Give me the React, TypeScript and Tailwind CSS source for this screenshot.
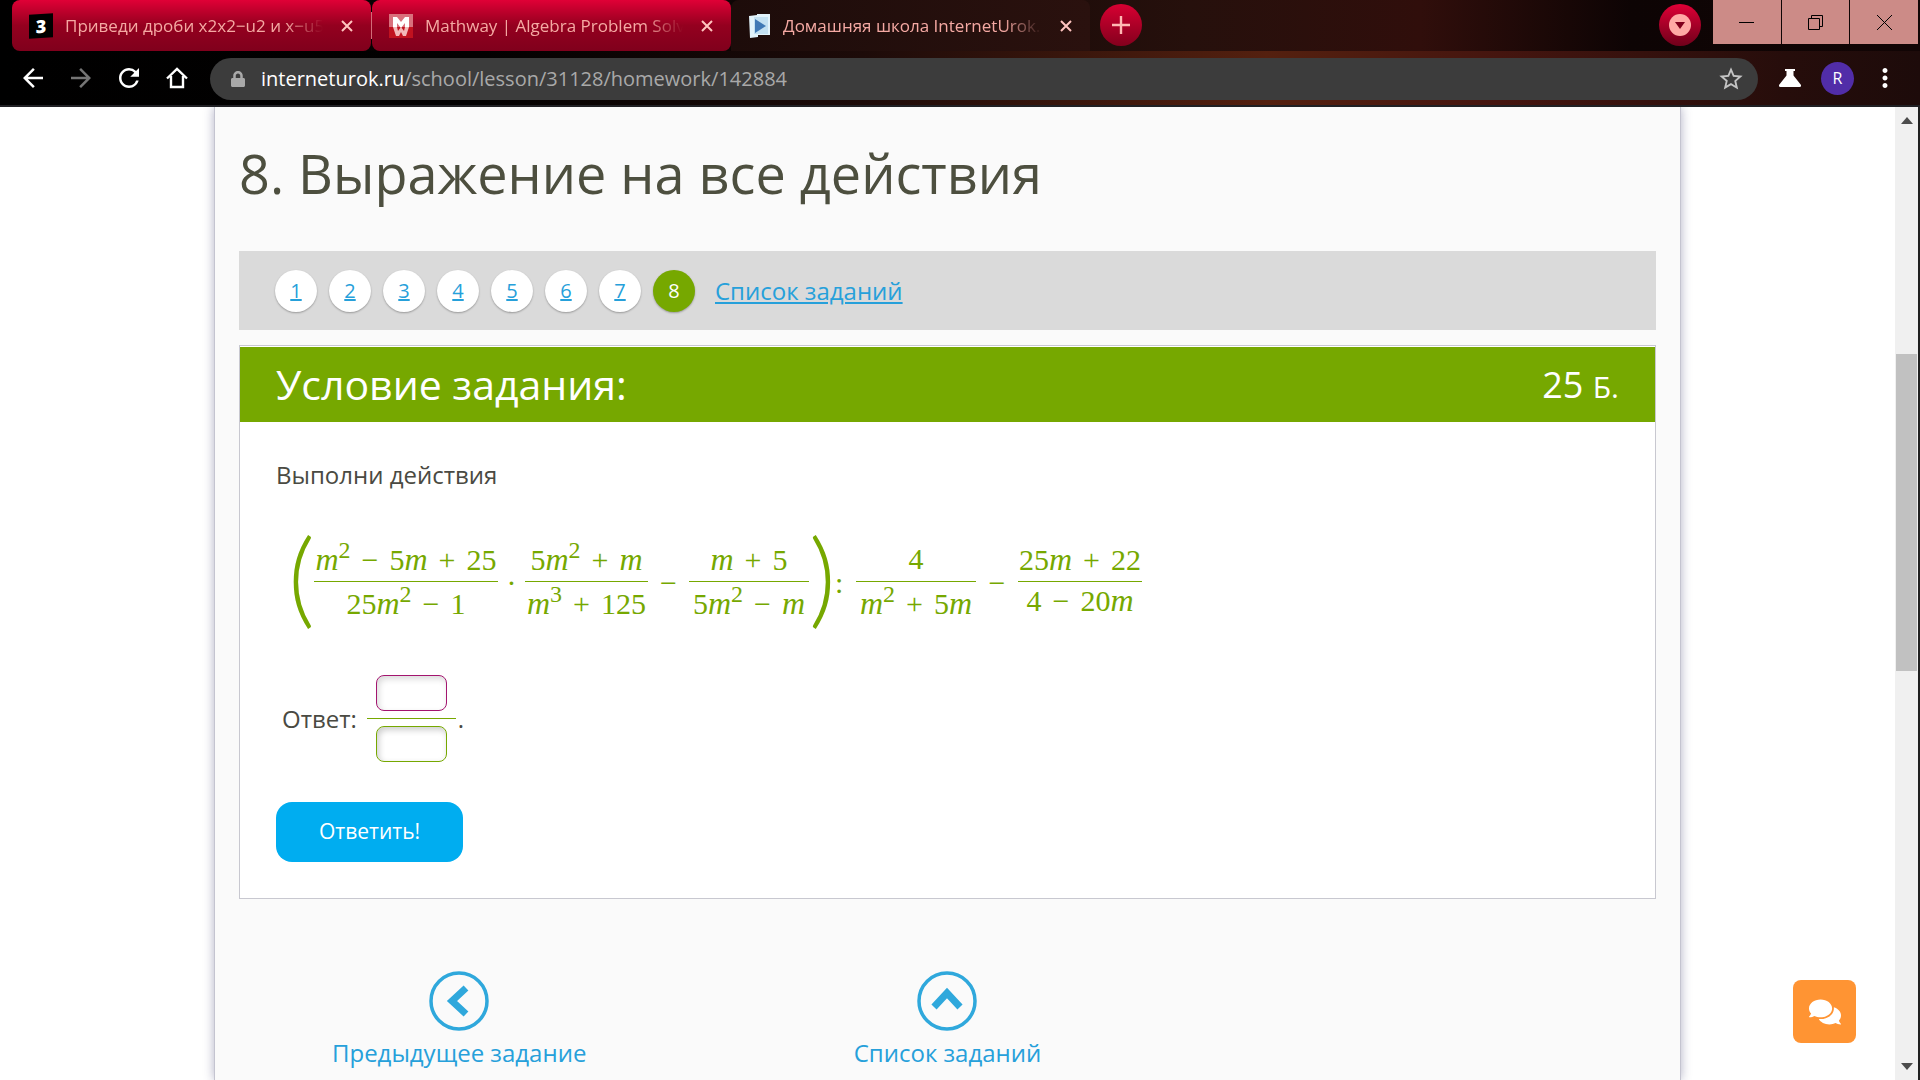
import type { ReactNode } from 'react';
import { FaComments, FaLock } from 'react-icons/fa';
import { MdArrowBack, MdArrowForward, MdMoreVert, MdRefresh, MdStarBorder } from 'react-icons/md';

function ZnanijaIcon() {
  return (
    <span className="w-6 h-6 shrink-0 bg-black text-white text-lg leading-6 font-extrabold text-center -skew-y-3">3</span>
  );
}

function MathwayIcon() {
  return (
    <svg viewBox="0 0 24 24" className="w-6 h-6 shrink-0">
      <rect width="24" height="13" fill="#d9707c" />
      <rect y="13" width="24" height="11" fill="#c1121f" />
      <path d="M4 13V3h4l4 5 4-5h4v10h-4V9l-4 5-4-5v4z" fill="#fff" />
      <path d="M4 13h4l1 4 3-4 3 4 1-4h4l-3 9h-3l-2-4-2 4H7z" fill="#f3b8b8" />
    </svg>
  );
}

function UrokIcon() {
  return (
    <svg viewBox="0 0 22 24" className="w-[22px] h-6 shrink-0">
      <path d="M0 2l8-1v-1h13v21H9v2l-8 1z" fill="#e2f3fb" />
      <path d="M5 3h14v17H5z" fill="#c2e0f2" />
      <path d="M6 5l11 7-11 7z" fill="#3f78b5" />
    </svg>
  );
}

function CloseIcon() {
  return (
    <svg viewBox="0 0 12 12" className="w-3 h-3" fill="none" stroke="currentColor" strokeWidth="2">
      <path d="M1 1l10 10M11 1L1 11" />
    </svg>
  );
}

function HomeIcon() {
  return (
    <svg viewBox="0 0 30 30" className="w-[30px] h-[30px]" fill="none" stroke="currentColor" strokeWidth="2.4">
      <path d="M5 15.500L15 6l10 9.500M9 13v11h12V13" />
    </svg>
  );
}

function FlaskIcon() {
  return (
    <svg viewBox="0 0 22 18" className="w-[22px] h-[18px]" fill="currentColor">
      <path d="M6 0h10v2h-1.500v4.500L22 16c.4 1.200-.2 2-1.400 2H1.400C.2 18-.4 17.200 0 16l7.500-9.500V2H6z" />
    </svg>
  );
}

function Tab({ icon, title, active }: { icon: ReactNode; title: string; active?: boolean }) {
  return (
    <div
      className={
        active
          ? 'flex items-center gap-3 w-[359px] min-w-0 pl-[18px] pr-3 bg-linear-to-r from-[#1d0c0a] to-[#2a110e] rounded-t-lg'
          : 'flex items-center gap-3 w-[359px] min-w-0 pl-[17px] pr-3 bg-linear-to-b from-[#e00036] via-[#94001f] via-50% to-[#80001c] rounded-lg'
      }
    >
      {icon}
      <span className="flex-1 min-w-0 whitespace-nowrap text-[17px] text-[#f5a9a3] [mask-image:linear-gradient(to_right,black_85%,transparent)]">
        {title}
      </span>
      <button aria-label="Закрыть вкладку" className="w-6 h-6 shrink-0 flex items-center justify-center text-[#ffc4bf]">
        <CloseIcon />
      </button>
    </div>
  );
}

function TabStrip() {
  return (
    <div className="flex h-[51px] pl-3 pr-0.5">
      <Tab icon={<ZnanijaIcon />} title="Приведи дроби x2x2−u2 и x−u5" />
      <div className="w-px my-3 bg-[#d36c78]" />
      <Tab icon={<MathwayIcon />} title="Mathway | Algebra Problem Solve" />
      <Tab icon={<UrokIcon />} title="Домашняя школа InternetUrok.r" active />
      <button
        aria-label="Новая вкладка"
        className="w-[42px] h-[42px] mt-1 ml-2.5 rounded-full flex items-center justify-center bg-linear-to-b from-[#d80032] to-[#84001d] text-[#ffb9b3]"
      >
        <svg viewBox="0 0 18 18" className="w-[18px] h-[18px]" stroke="currentColor" strokeWidth="2.4">
          <path d="M9 0v18M0 9h18" />
        </svg>
      </button>
      <div className="flex-1" />
      <button
        aria-label="Поиск вкладок"
        className="w-[42px] h-[42px] mt-1 mr-3 rounded-full flex items-center justify-center bg-linear-to-b from-[#e00036] to-[#70001a]"
      >
        <svg viewBox="0 0 22 22" className="w-[22px] h-[22px]">
          <circle cx="11" cy="11" r="11" fill="#ffaaa5" />
          <path d="M6 8h10l-5 7z" fill="#80001c" />
        </svg>
      </button>
      <div className="grid grid-cols-3 gap-px w-[205px] h-11 text-black">
        <button aria-label="Свернуть" className="bg-[#cc8b87] flex items-center justify-center">
          <svg viewBox="0 0 15 15" className="w-[15px] h-[15px]" stroke="currentColor">
            <path d="M0 7.500h15" />
          </svg>
        </button>
        <button aria-label="Развернуть" className="bg-[#cc8b87] flex items-center justify-center">
          <svg viewBox="0 0 15 15" className="w-[15px] h-[15px]" fill="none" stroke="currentColor">
            <path d="M.5 3.500h11v11H.5zM3.500 3.500v-3h11v11h-3" />
          </svg>
        </button>
        <button aria-label="Закрыть" className="bg-[#cc8b87] flex items-center justify-center">
          <svg viewBox="0 0 15 15" className="w-[15px] h-[15px]" stroke="currentColor">
            <path d="M0 0l15 15M15 0L0 15" />
          </svg>
        </button>
      </div>
    </div>
  );
}

function Toolbar() {
  return (
    <div className="flex items-center h-14 pl-[18px] pr-5 text-white border-b-2 border-[#202024] bg-[linear-gradient(to_right,#000_0%,#030101_25%,#1d0b09_45%,#54200f_66%,#45150f_78%,#260d0b_93%,#1d0b0a_100%)]">
      <div className="flex gap-[18px] text-[30px]">
        <button aria-label="Назад"><MdArrowBack /></button>
        <button aria-label="Вперёд" className="text-[#757575]"><MdArrowForward /></button>
        <button aria-label="Обновить"><MdRefresh /></button>
        <button aria-label="Домой"><HomeIcon /></button>
      </div>
      <div className="flex-1 flex items-center h-[42px] mt-0.5 ml-[18px] pl-5 pr-[13px] rounded-full bg-[#3c3c3c] text-[#a9a9a9]">
        <FaLock className="text-base mr-[15px]" />
        <span className="flex-1 text-xl">
          <span className="text-white">interneturok.ru</span>/school/lesson/31128/homework/142884
        </span>
        <button aria-label="Добавить в закладки" className="text-[28px] text-[#c4c4c4]"><MdStarBorder /></button>
      </div>
      <button aria-label="Эксперименты" className="ml-[21px]"><FlaskIcon /></button>
      <button aria-label="Профиль" className="w-[33px] h-[33px] ml-5 rounded-full bg-[#512da8] text-base">R</button>
      <button aria-label="Меню" className="ml-4 text-[30px]"><MdMoreVert /></button>
    </div>
  );
}

const M = () => <i className="text-[32px]">m</i>;
const Sup = ({ children }: { children: ReactNode }) => <sup className="text-2xl">{children}</sup>;
const Op = ({ children }: { children: ReactNode }) => <span className="mx-[11px]">{children}</span>;

function Frac({ top, bottom, width, tight }: { top: ReactNode; bottom: ReactNode; width: string; tight?: boolean }) {
  return (
    <span className={`flex flex-col text-center whitespace-nowrap ${width}`}>
      <span className="h-11 leading-[42px] border-b border-[#76a800]">{top}</span>
      <span className={tight ? 'h-11 leading-[36px]' : 'h-11 leading-[42px]'}>{bottom}</span>
    </span>
  );
}

function Paren({ children }: { children: ReactNode }) {
  return (
    <span className="w-[26px] h-[90px] text-[104px] leading-[76px] text-center font-light font-['Lato',sans-serif]">
      {children}
    </span>
  );
}

function Formula() {
  return (
    <div className="flex items-center h-[90px] pl-3 text-[30px] text-[#76a800] font-['Liberation_Serif',serif]">
      <Paren>(</Paren>
      <Frac
        width="w-[184px]"
        top={<><M /><Sup>2</Sup><Op>−</Op>5<M /><Op>+</Op>25</>}
        bottom={<>25<M /><Sup>2</Sup><Op>−</Op>1</>}
      />
      <span className="w-[27px] text-center">·</span>
      <Frac
        width="w-[123px]"
        top={<>5<M /><Sup>2</Sup><Op>+</Op><M /></>}
        bottom={<><M /><Sup>3</Sup><Op>+</Op>125</>}
      />
      <span className="w-[41px] text-center">−</span>
      <Frac
        width="w-[120px]"
        top={<><M /><Op>+</Op>5</>}
        bottom={<>5<M /><Sup>2</Sup><Op>−</Op><M /></>}
      />
      <Paren>)</Paren>
      <span className="w-[21px]">:</span>
      <Frac width="w-[120px]" top="4" bottom={<><M /><Sup>2</Sup><Op>+</Op>5<M /></>} />
      <span className="w-[42px] text-center">−</span>
      <Frac width="w-[124px]" top={<>25<M /><Op>+</Op>22</>} bottom={<>4<Op>−</Op>20<M /></>} tight />
    </div>
  );
}

function Pager() {
  return (
    <nav className="flex items-center h-[79px] px-9 bg-[#dadada] text-[#26a0da]">
      <div className="flex gap-3">
        {[1, 2, 3, 4, 5, 6, 7].map((n) => (
          <a
            key={n}
            href={`#task-${n}`}
            className="w-[42px] h-[42px] rounded-full bg-white text-xl leading-[42px] text-center underline shadow-[0_1px_2px_rgba(0,0,0,0.3)]"
          >
            {n}
          </a>
        ))}
        <span className="w-[42px] h-[42px] rounded-full bg-[#76a800] text-white text-xl leading-[42px] text-center shadow-[0_1px_2px_rgba(0,0,0,0.3)]">
          8
        </span>
      </div>
      <a href="#list" className="ml-5 text-2xl underline">Список заданий</a>
    </nav>
  );
}

function Answer() {
  return (
    <div className="flex items-center gap-2.5 pl-1.5 text-2xl">
      <label htmlFor="numerator">Ответ:</label>
      <div className="flex items-center gap-0.5">
        <div className="flex flex-col items-center gap-[7px] w-[89px]">
          <input
            id="numerator"
            type="text"
            className="w-[71px] h-9 px-2 rounded-lg border border-[#a3156f] bg-white shadow-[inset_2px_3px_6px_rgba(0,0,0,0.15)]"
          />
          <div className="w-full h-px bg-[#76a800]" />
          <input
            aria-label="Знаменатель"
            type="text"
            className="w-[71px] h-9 px-2 rounded-lg border border-[#76a800] bg-white shadow-[inset_2px_3px_6px_rgba(0,0,0,0.2)]"
          />
        </div>
        <span>.</span>
      </div>
    </div>
  );
}

function TaskCard() {
  return (
    <section className="mt-[15px] border border-[#c8c8d0] bg-white">
      <header className="flex items-center justify-between h-[75px] px-9 mt-px bg-[#76a800] text-white">
        <h2 className="text-[41px]">Условие задания:</h2>
        <span className="text-4xl">25 <span className="text-3xl">Б.</span></span>
      </header>
      <div className="px-9 pt-[37px] pb-9">
        <p className="text-2xl">Выполни действия</p>
        <div className="mt-[46px]">
          <Formula />
        </div>
        <div className="mt-12">
          <Answer />
        </div>
        <button className="mt-10 w-[187px] h-[60px] rounded-2xl bg-[#00adf0] text-white text-[21px]">Ответить!</button>
      </div>
    </section>
  );
}

function NavLink({ href, label, path }: { href: string; label: string; path: string }) {
  return (
    <a href={href} className="flex flex-col items-center gap-1.5 text-2xl text-[#26a0da]">
      <svg viewBox="0 0 60 60" className="w-[60px] h-[60px]" fill="none" stroke="#2fa8dc">
        <circle cx="30" cy="30" r="28" strokeWidth="3.5" />
        <path d={path} strokeWidth="7" />
      </svg>
      {label}
    </a>
  );
}

function Scrollbar() {
  return (
    <div className="flex flex-col items-center w-[23px] py-2.5 bg-[#f0f0f0]">
      <svg viewBox="0 0 12 7" className="w-3 h-[7px]"><path d="M0 7l6-7 6 7z" fill="#4c4c4c" /></svg>
      <div className="grow-[230]" />
      <div className="w-[21px] grow-[317] bg-[#c1c1c1]" />
      <div className="grow-[392]" />
      <svg viewBox="0 0 12 7" className="w-3 h-[7px]"><path d="M0 0l6 7 6-7z" fill="#4c4c4c" /></svg>
    </div>
  );
}

export default function App() {
  return (
    <div className="h-screen flex flex-col overflow-hidden bg-white font-['Open_Sans','Noto_Sans',sans-serif]">
      <div className="bg-[linear-gradient(to_right,#000_0%,#0a0303_35%,#26100c_62%,#300e0b_74%,#0d0404_85%,#120505_100%)]">
        <TabStrip />
        <Toolbar />
      </div>
      <div className="flex-1 min-h-0 flex border-r-2 border-[#202020]">
        <div className="relative flex-1 min-w-0 overflow-hidden">
          <main className="w-full max-w-[1467px] min-h-full mx-auto border-x border-[#c4c4d0] bg-[#fafafa] text-[#4a4a42] shadow-[0_0_10px_rgba(60,60,110,0.4)]">
            <div className="px-6">
              <h1 className="pt-[26px] pb-[38px] text-[54px] leading-[80px] text-[#4d4f3f]">8. Выражение на все действия</h1>
              <Pager />
              <TaskCard />
            </div>
            <div className="grid grid-cols-3 pt-[72px]">
              <NavLink href="#prev" label="Предыдущее задание" path="M37 17L23 30L37 43" />
              <NavLink href="#list" label="Список заданий" path="M17 36L30 22L43 36" />
            </div>
          </main>
          <button
            aria-label="Открыть чат"
            className="absolute right-[39px] bottom-[37px] w-[63px] h-[63px] rounded-lg bg-[#ff9433] text-white text-[32px] flex items-center justify-center"
          >
            <FaComments />
          </button>
        </div>
        <Scrollbar />
      </div>
    </div>
  );
}
